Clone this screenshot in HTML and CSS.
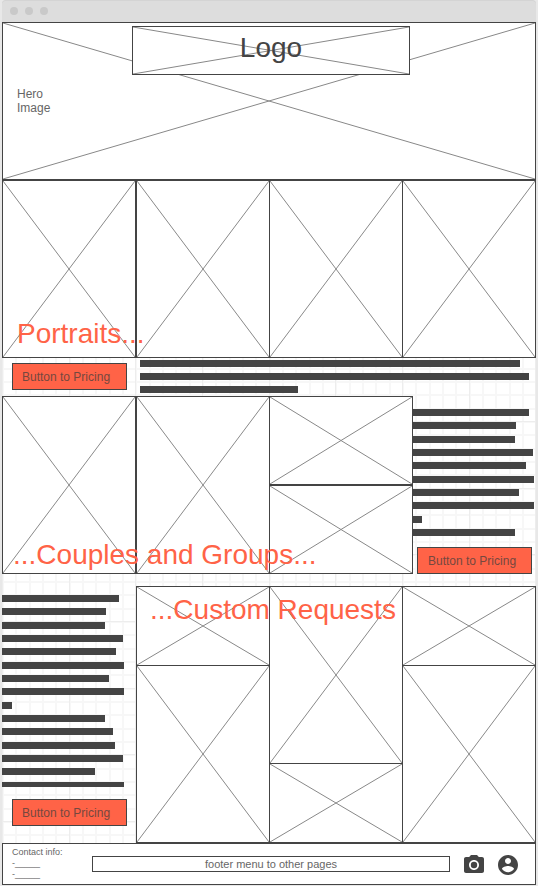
FILE: index.html
```html
<!DOCTYPE html>
<html lang="en">
<head>
<meta charset="utf-8">
<meta name="viewport" content="width=device-width, initial-scale=1">
<title>Photography site wireframe</title>
<link rel="stylesheet" href="styles.css">
</head>
<body>
<div class="window">
  <div class="titlebar"><span class="dot"></span><span class="dot"></span><span class="dot"></span></div>

  <header class="hero frame">
    <svg class="cross"><line x1="0" y1="0" x2="100%" y2="100%"/><line x1="0" y1="100%" x2="100%" y2="0"/></svg>
    <div class="logo frame">
      <svg class="cross"><line x1="0" y1="0" x2="100%" y2="100%"/><line x1="0" y1="100%" x2="100%" y2="0"/></svg>
      <h1>Logo</h1>
    </div>
    <p class="hero-label">Hero<br>Image</p>
  </header>

  <main>
    <section class="portraits">
      <div class="portrait-grid">
        <div class="frame"><svg class="cross"><line x1="0" y1="0" x2="100%" y2="100%"/><line x1="0" y1="100%" x2="100%" y2="0"/></svg></div>
        <div class="frame open-right"><svg class="cross"><line x1="0" y1="0" x2="100%" y2="100%"/><line x1="0" y1="100%" x2="100%" y2="0"/></svg></div>
        <div class="frame open-right"><svg class="cross"><line x1="0" y1="0" x2="100%" y2="100%"/><line x1="0" y1="100%" x2="100%" y2="0"/></svg></div>
        <div class="frame"><svg class="cross"><line x1="0" y1="0" x2="100%" y2="100%"/><line x1="0" y1="100%" x2="100%" y2="0"/></svg></div>
      </div>
      <h2>Portraits...</h2>
    </section>

    <div class="intro">
      <button type="button" class="pricing">Button to Pricing</button>
      <div class="bars intro-bars">
        <span style="width:380px"></span><span style="width:389px"></span><span style="width:158px"></span>
      </div>
    </div>

    <section class="couples">
      <div class="frame"><svg class="cross"><line x1="0" y1="0" x2="100%" y2="100%"/><line x1="0" y1="100%" x2="100%" y2="0"/></svg></div>
      <div class="frame open-right"><svg class="cross"><line x1="0" y1="0" x2="100%" y2="100%"/><line x1="0" y1="100%" x2="100%" y2="0"/></svg></div>
      <div class="stack halves">
        <div class="frame"><svg class="cross"><line x1="0" y1="0" x2="100%" y2="100%"/><line x1="0" y1="100%" x2="100%" y2="0"/></svg></div>
        <div class="frame"><svg class="cross"><line x1="0" y1="0" x2="100%" y2="100%"/><line x1="0" y1="100%" x2="100%" y2="0"/></svg></div>
      </div>
      <div class="couples-side">
        <div class="bars couples-bars">
          <span style="width:116px"></span><span style="width:103px"></span><span style="width:102px"></span><span style="width:120px"></span><span style="width:113px"></span><span style="width:121px"></span><span style="width:106px"></span><span style="width:121px"></span><span style="width:9px"></span><span style="width:102px"></span>
        </div>
        <button type="button" class="pricing">Button to Pricing</button>
      </div>
      <h2>...Couples and Groups...</h2>
    </section>

    <section class="custom">
      <div class="custom-side">
        <div class="bars custom-bars">
          <span style="width:117px"></span><span style="width:104px"></span><span style="width:103px"></span><span style="width:121px"></span><span style="width:114px"></span><span style="width:122px"></span><span style="width:107px"></span><span style="width:122px"></span><span style="width:10px"></span><span style="width:103px"></span><span style="width:111px"></span><span style="width:113px"></span><span style="width:121px"></span><span style="width:93px"></span><span class="cut" style="width:122px"></span>
        </div>
        <button type="button" class="pricing">Button to Pricing</button>
      </div>
      <div class="stack short-tall">
        <div class="frame open-right open-bottom"><svg class="cross"><line x1="0" y1="0" x2="100%" y2="100%"/><line x1="0" y1="100%" x2="100%" y2="0"/></svg></div>
        <div class="frame open-right"><svg class="cross"><line x1="0" y1="0" x2="100%" y2="100%"/><line x1="0" y1="100%" x2="100%" y2="0"/></svg></div>
      </div>
      <div class="stack tall-short">
        <div class="frame open-right open-bottom"><svg class="cross"><line x1="0" y1="0" x2="100%" y2="100%"/><line x1="0" y1="100%" x2="100%" y2="0"/></svg></div>
        <div class="frame open-right"><svg class="cross"><line x1="0" y1="0" x2="100%" y2="100%"/><line x1="0" y1="100%" x2="100%" y2="0"/></svg></div>
      </div>
      <div class="stack short-tall">
        <div class="frame open-bottom"><svg class="cross"><line x1="0" y1="0" x2="100%" y2="100%"/><line x1="0" y1="100%" x2="100%" y2="0"/></svg></div>
        <div class="frame"><svg class="cross"><line x1="0" y1="0" x2="100%" y2="100%"/><line x1="0" y1="100%" x2="100%" y2="0"/></svg></div>
      </div>
      <h2>...Custom Requests</h2>
    </section>
  </main>

  <footer class="footer frame">
    <p class="contact">Contact info:<br>-_____<br>-_____</p>
    <nav class="footer-menu frame">footer menu to other pages</nav>
    <div class="icons">
      <svg viewBox="0 0 24 24"><circle cx="12" cy="12" r="3.2"/><path d="M9 2 7.17 4H4c-1.1 0-2 .9-2 2v12c0 1.1.9 2 2 2h16c1.1 0 2-.9 2-2V6c0-1.1-.9-2-2-2h-3.17L15 2H9zm3 15c-2.76 0-5-2.24-5-5s2.24-5 5-5 5 2.24 5 5-2.24 5-5 5z"/></svg>
      <svg viewBox="0 0 24 24"><path d="M12 2C6.48 2 2 6.48 2 12s4.48 10 10 10 10-4.48 10-10S17.52 2 12 2zm0 3c1.66 0 3 1.34 3 3s-1.34 3-3 3-3-1.34-3-3 1.34-3 3-3zm0 14.2c-2.5 0-4.71-1.28-6-3.22.03-1.99 4-3.08 6-3.08 1.99 0 5.97 1.09 6 3.08-1.29 1.94-3.5 3.22-6 3.22z"/></svg>
    </div>
  </footer>
</div>
</body>
</html>
```
FILE: styles.css
```css
:root {
  --ink: #444;
  --accent: #ff6347;
  --grid-step: calc(40px / 3);
  --grid-major: calc(200px / 3);
}

* { box-sizing: border-box; }

body {
  margin: 0;
  background: #e8e8e8;
  color: #666;
  font-family: "Liberation Sans", Arial, sans-serif;
  font-size: 12px;
  line-height: 14px;
}

h1, h2, p { margin: 0; }

h1, h2 {
  font-size: 28px;
  line-height: 32px;
  font-weight: 400;
}

h1 { color: var(--ink); }

h2 {
  position: absolute;
  color: var(--accent);
  white-space: nowrap;
}

.window { margin: 0 2px 1px; }

.titlebar {
  display: flex;
  align-items: center;
  gap: 7px;
  height: 22px;
  padding-left: 8px;
  background: #ddd;
  box-shadow: inset 0 1px #d4d4d4;
  border-radius: 4px 4px 0 0;
}

.dot {
  width: 8px;
  height: 8px;
  border-radius: 50%;
  background: #c9c9c9;
}

.frame {
  position: relative;
  background: #fff;
  border: 1px solid var(--ink);
}

.open-right { border-right: 0; }
.open-bottom { border-bottom: 0; }

.cross {
  position: absolute;
  inset: 0;
  width: 100%;
  height: 100%;
  stroke: #888;
  stroke-width: 1;
}

.hero {
  min-height: 158px;
  padding: 3px 0 0 4px;
}

.logo {
  width: 278px;
  height: 49px;
  margin: 0 auto;
  padding-top: 5px;
  text-align: center;
}

.logo h1 { position: relative; }

.hero-label {
  position: relative;
  padding: 12px 10px;
}

main {
  background:
    repeating-linear-gradient(90deg, #ededed 0 1px, transparent 1px var(--grid-major)),
    repeating-linear-gradient(#ededed 0 1px, transparent 1px var(--grid-major)) 0 41px,
    repeating-linear-gradient(90deg, #f7f7f7 0 2px, transparent 2px var(--grid-step)),
    repeating-linear-gradient(#f7f7f7 0 2px, transparent 2px var(--grid-step)) 0 1px,
    #fff;
}

section { position: relative; }

.portrait-grid {
  display: grid;
  grid-template-columns: 134fr 133fr 133fr 134fr;
  height: 178px;
}

.portraits h2 { left: 15px; bottom: 8px; }

.bars {
  display: flex;
  flex-direction: column;
  justify-content: space-between;
}

.bars span {
  height: 7px;
  background: var(--ink);
}

.bars .cut { height: 5px; }

.intro {
  display: flex;
  gap: 13px;
  padding: 2px 0 3px 10px;
}

.intro .pricing { margin-top: 3px; }
.intro-bars { height: 33px; }

.pricing {
  width: 115px;
  height: 27px;
  padding: 0 9px;
  background: var(--accent);
  border: 1px solid var(--ink);
  border-radius: 0;
  color: #75483f;
  font: inherit;
  text-align: left;
}

.couples {
  display: grid;
  grid-template-columns: 134fr 133fr 144fr 123fr;
  height: 178px;
}

.couples h2 { left: 11px; bottom: 3px; }

.stack { display: grid; }
.halves { grid-template-rows: 1fr 1fr; }
.short-tall { grid-template-rows: 79fr 178fr; }
.tall-short { grid-template-rows: 177fr 80fr; }

.couples-side { padding-top: 13px; }
.couples-bars { height: 127px; margin-bottom: 11px; }
.couples-side .pricing { margin-left: 4px; padding-left: 10px; }

.custom {
  display: grid;
  grid-template-columns: 134fr 133fr 133fr 134fr;
  height: 257px;
  margin-top: 12px;
}

.custom h2 { left: 148px; top: 8px; }

.custom-side { padding-top: 9px; }
.custom-bars { height: 192px; margin-bottom: 12px; }
.custom-side .pricing { margin-left: 10px; }

.footer {
  display: flex;
  height: 42px;
  padding: 3px 15px 0 9px;
}

.contact {
  flex: 0 0 80px;
  font-size: 9px;
  line-height: 11px;
}

.footer-menu {
  flex: 1;
  height: 16px;
  margin: 9px 12px 0 0;
  font-size: 11px;
  line-height: 14px;
  text-align: center;
}

.icons {
  display: flex;
  gap: 10px;
  padding-top: 6px;
}

.icons svg {
  width: 24px;
  height: 24px;
  fill: var(--ink);
}
```
